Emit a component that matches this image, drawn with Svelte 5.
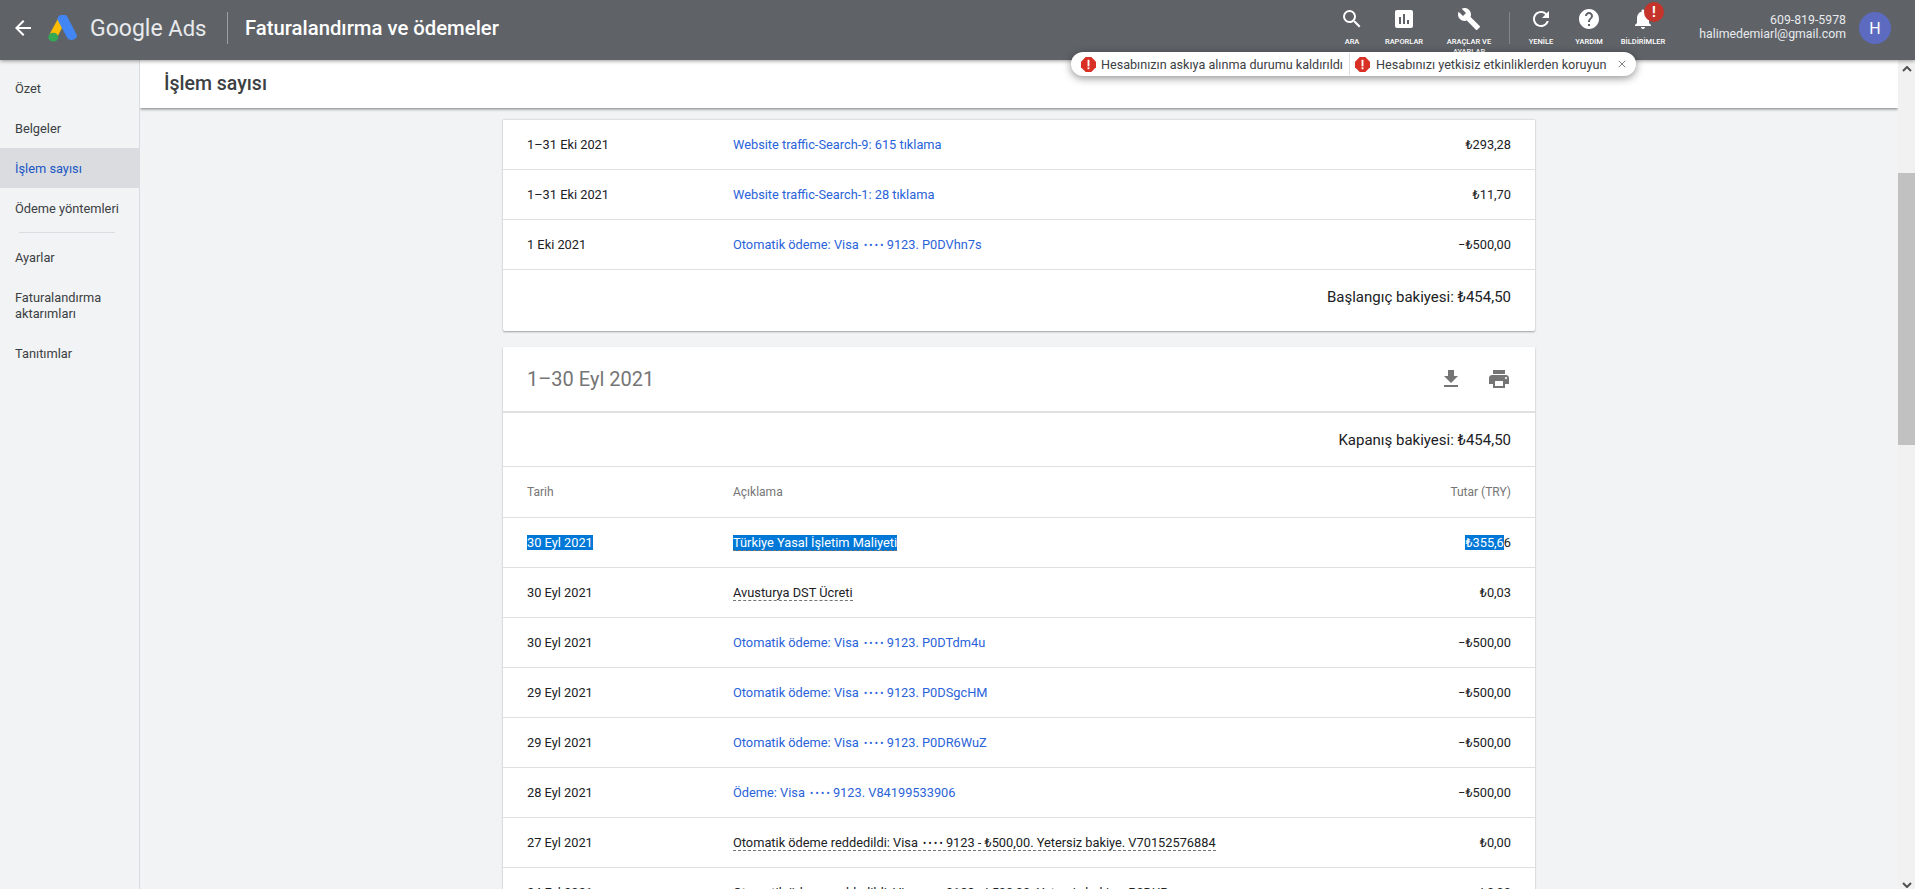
<script lang="ts">
  type Row = {
    date: string;
    desc: string;
    amount: string;
    kind?: 'link' | 'dash' | 'sel';
  };

  const nav = ['Özet', 'Belgeler', 'İşlem sayısı', 'Ödeme yöntemleri'];
  const nav2 = ['Ayarlar', 'Faturalandırma aktarımları', 'Tanıtımlar'];

  const octRows: Row[] = [
    { date: '1–31 Eki 2021', desc: 'Website traffic-Search-9: 615 tıklama', amount: '₺293,28', kind: 'link' },
    { date: '1–31 Eki 2021', desc: 'Website traffic-Search-1: 28 tıklama', amount: '₺11,70', kind: 'link' },
    { date: '1 Eki 2021', desc: 'Otomatik ödeme: Visa •••• 9123. P0DVhn7s', amount: '−₺500,00', kind: 'link' }
  ];

  const sepRows: Row[] = [
    { date: '30 Eyl 2021', desc: 'Avusturya DST Ücreti', amount: '₺0,03', kind: 'dash' },
    { date: '30 Eyl 2021', desc: 'Otomatik ödeme: Visa •••• 9123. P0DTdm4u', amount: '−₺500,00', kind: 'link' },
    { date: '29 Eyl 2021', desc: 'Otomatik ödeme: Visa •••• 9123. P0DSgcHM', amount: '−₺500,00', kind: 'link' },
    { date: '29 Eyl 2021', desc: 'Otomatik ödeme: Visa •••• 9123. P0DR6WuZ', amount: '−₺500,00', kind: 'link' },
    { date: '28 Eyl 2021', desc: 'Ödeme: Visa •••• 9123. V84199533906', amount: '−₺500,00', kind: 'link' },
    { date: '27 Eyl 2021', desc: 'Otomatik ödeme reddedildi: Visa •••• 9123 - ₺500,00. Yetersiz bakiye. V70152576884', amount: '₺0,00', kind: 'dash' },
    { date: '24 Eyl 2021', desc: 'Otomatik ödeme reddedildi: Visa •••• 9123 - ₺500,00. Yetersiz bakiye. P0DUR', amount: '₺0,00', kind: 'dash' }
  ];
</script>

{#snippet cardText(text: string)}
  {#each text.split('•••• ') as part, j}{#if j}<span class="dots">••••</span>{/if}{part}{/each}
{/snippet}

<div class="page">
  <header class="topbar">
    <svg class="back" viewBox="0 0 24 24" width="24" height="24"><path fill="#fff" d="M20 11H7.83l5.59-5.59L12 4l-8 8 8 8 1.41-1.41L7.83 13H20z" /></svg>
    <svg class="logo" viewBox="0 0 26 28" width="30" height="27" preserveAspectRatio="none">
      <path d="M9.2 2.6 1.5 19.8l6.6 3 6.4-15z" fill="#fbbc04" />
      <path d="M8.5 5.5a4.6 4.6 0 0 1 8-4.2L24.6 20a4.4 4.4 0 0 1-8 3.6z" fill="#4285f4" />
      <ellipse cx="4.6" cy="23" rx="4.300" ry="4.600" fill="#34a853" />
    </svg>
    <div class="brand"><span class="g">Google</span> <span class="a">Ads</span></div>
    <div class="vr"></div>
    <div class="title">Faturalandırma ve ödemeler</div>

    <div class="tools">
      <div class="tool t-search">
        <svg viewBox="0 0 24 24" width="24" height="24"><path fill="#fff" d="M15.5 14h-.79l-.28-.27A6.47 6.47 0 0 0 16 9.5 6.5 6.5 0 1 0 9.5 16c1.61 0 3.09-.59 4.23-1.57l.27.28v.79l5 4.99L20.49 19l-4.99-5zm-6 0C7.01 14 5 11.99 5 9.5S7.01 5 9.5 5 14 7.01 14 9.5 11.99 14 9.5 14z" /></svg>
        <span>ARA</span>
      </div>
      <div class="tool t-rep">
        <svg viewBox="0 0 24 24" width="24" height="24"><path fill="#fff" d="M19 3H5c-1.1 0-2 .9-2 2v14c0 1.1.9 2 2 2h14c1.1 0 2-.9 2-2V5c0-1.100-.9-2-2-2zM9 17H7v-7h2v7zm4 0h-2V7h2v10zm4 0h-2v-4h2v4z" /></svg>
        <span>RAPORLAR</span>
      </div>
      <div class="tool t-set">
        <svg viewBox="0 0 24 24" width="24" height="24"><path fill="#fff" d="M22.700 19l-9.100-9.100c.9-2.300.4-5-1.500-6.900-2-2-5-2.400-7.400-1.300L9 6 6 9 1.600 4.700C.4 7.100.9 10.100 2.900 12.100c1.900 1.900 4.600 2.400 6.900 1.500l9.100 9.100c.4.400 1 .4 1.400 0l2.300-2.300c.5-.4.500-1.100.1-1.400z" /></svg>
        <span>ARAÇLAR VE AYARLAR</span>
      </div>
      <div class="tool-sep"></div>
      <div class="tool t-ref">
        <svg viewBox="0 0 24 24" width="24" height="24"><path fill="#fff" d="M17.650 6.350A7.958 7.958 0 0 0 12 4c-4.420 0-7.990 3.580-7.990 8s3.570 8 7.990 8c3.730 0 6.840-2.550 7.730-6h-2.080A5.990 5.990 0 0 1 12 18c-3.310 0-6-2.690-6-6s2.690-6 6-6c1.660 0 3.140.69 4.220 1.780L13 11h7V4l-2.350 2.350z" /></svg>
        <span>YENİLE</span>
      </div>
      <div class="tool t-help">
        <svg viewBox="0 0 24 24" width="24" height="24"><path fill="#fff" d="M12 2C6.480 2 2 6.480 2 12s4.480 10 10 10 10-4.480 10-10S17.520 2 12 2zm1 17h-2v-2h2v2zm2.070-7.750l-.9.920C13.450 12.900 13 13.500 13 15h-2v-.5c0-1.100.45-2.100 1.170-2.830l1.240-1.260c.37-.36.59-.86.59-1.410 0-1.100-.9-2-2-2s-2 .9-2 2H8c0-2.210 1.790-4 4-4s4 1.790 4 4c0 .88-.36 1.680-.93 2.250z" /></svg>
        <span>YARDIM</span>
      </div>
      <div class="tool t-bell">
        <svg viewBox="0 0 24 24" width="24" height="24"><path fill="#fff" d="M12 22c1.100 0 2-.9 2-2h-4c0 1.100.9 2 2 2zm6-6v-5c0-3.070-1.630-5.640-4.500-6.320V4c0-.83-.67-1.500-1.500-1.500s-1.500.67-1.500 1.500v.68C7.640 5.360 6 7.920 6 11v5l-2 2v1h16v-1l-2-2z" /></svg>
        <span>BİLDİRİMLER</span>
        <b class="bang">!</b>
      </div>
    </div>

    <div class="account">
      <div>609-819-5978</div>
      <div>halimedemiarl@gmail.com</div>
    </div>
    <div class="avatar">H</div>
  </header>

  <div class="body">
    <aside class="side">
      <nav>
        {#each nav as item, i}
          <div class="nav-item" class:active={i === 2}>{item}</div>
        {/each}
        <div class="nav-sep"></div>
        {#each nav2 as item, i}
          <div class="nav-item" class:tall={i === 1}>{item}</div>
        {/each}
      </nav>
    </aside>

    <main class="main">
      <div class="subhead">İşlem sayısı</div>

      <div class="content">
        <section class="card first">
          {#each octRows as r}
            <div class="row">
              <div class="c-date">{r.date}</div>
              <div class="c-desc"><span class={r.kind}>{@render cardText(r.desc)}</span></div>
              <div class="c-amt">{r.amount}</div>
            </div>
          {/each}
          <div class="balance open">Başlangıç bakiyesi: ₺454,50</div>
        </section>

        <section class="card">
          <div class="card-head">
            <h2>1–30 Eyl 2021</h2>
            <div class="card-icons">
              <svg viewBox="0 0 24 24" width="24" height="24"><path fill="#757575" d="M19 9h-4V3H9v6H5l7 7 7-7zM5 18v2h14v-2H5z" /></svg>
              <svg viewBox="0 0 24 24" width="24" height="24"><path fill="#757575" d="M19 8H5c-1.660 0-3 1.340-3 3v6h4v4h12v-4h4v-6c0-1.660-1.340-3-3-3zm-3 11H8v-5h8v5zm3-7c-.55 0-1-.45-1-1s.45-1 1-1 1 .45 1 1-.45 1-1 1zm-1-9H6v4h12V3z" /></svg>
            </div>
          </div>
          <div class="balance close">Kapanış bakiyesi: ₺454,50</div>
          <div class="row head">
            <div class="c-date">Tarih</div>
            <div class="c-desc">Açıklama</div>
            <div class="c-amt">Tutar (TRY)</div>
          </div>
          <div class="row">
            <div class="c-date"><span class="sel-text">30 Eyl 2021</span></div>
            <div class="c-desc"><span class="dash sel-text">Türkiye Yasal İşletim Maliyeti</span></div>
            <div class="c-amt"><span class="sel-text">₺355,6</span>6</div>
          </div>
          {#each sepRows as r}
            <div class="row">
              <div class="c-date">{r.date}</div>
              <div class="c-desc"><span class={r.kind}>{@render cardText(r.desc)}</span></div>
              <div class="c-amt">{r.amount}</div>
            </div>
          {/each}
        </section>
      </div>
    </main>

    <div class="scrollbar">
      <svg class="arrow up" viewBox="0 0 10 6" width="10" height="6"><path d="M1 5l4-4 4 4" fill="none" stroke="#505050" stroke-width="2" /></svg>
      <div class="thumb"></div>
      <svg class="arrow down" viewBox="0 0 10 6" width="10" height="6"><path d="M1 1l4 4 4-4" fill="none" stroke="#505050" stroke-width="2" /></svg>
    </div>
  </div>

  <div class="toast">
    <svg class="warn" viewBox="0 0 16 16" width="16" height="16"><path fill="#d93025" d="M5 0h6l5 5v6l-5 5H5l-5-5V5z" /><rect x="7" y="3" width="2" height="7" fill="#fff" /><rect x="7" y="11" width="2" height="2" fill="#fff" /></svg>
    <span class="msg one">Hesabınızın askıya alınma durumu kaldırıldı</span>
    <i class="toast-sep"></i>
    <svg class="warn" viewBox="0 0 16 16" width="16" height="16"><path fill="#d93025" d="M5 0h6l5 5v6l-5 5H5l-5-5V5z" /><rect x="7" y="3" width="2" height="7" fill="#fff" /><rect x="7" y="11" width="2" height="2" fill="#fff" /></svg>
    <span class="msg two">Hesabınızı yetkisiz etkinliklerden koruyun</span>
    <svg class="x" viewBox="0 0 10 10" width="10" height="10"><path d="M1 1l8 8M9 1l-8 8" stroke="#5f6368" stroke-width="1" fill="none" /></svg>
  </div>
</div>

<style>
  :global(body) {
    margin: 0;
    overflow: hidden;
    background: #f1f3f4;
    font-family: Roboto, "Liberation Sans", sans-serif;
    color: #202124;
  }

  .page {
    position: relative;
    height: 889px;
    overflow: hidden;
  }

  .topbar {
    position: relative;
    z-index: 3;
    height: 60px;
    box-sizing: border-box;
    padding-bottom: 4px;
    background: #5f6368;
    box-shadow: 0 1px 4px rgba(0, 0, 0, 0.4);
    display: flex;
    align-items: center;
    color: #fff;
  }

  .back {
    margin-left: 11px;
    flex: none;
  }

  .logo {
    margin-left: 13px;
    flex: none;
  }

  .brand {
    flex: none;
    width: 119px;
    margin-left: 12px;
    font-size: 23px;
    color: #e8eaed;
    white-space: nowrap;
  }

  .brand .a {
    font-size: 22px;
  }

  .vr {
    flex: none;
    width: 1px;
    height: 32px;
    margin-left: 18px;
    background: #9aa0a6;
  }

  .title {
    margin-left: 17px;
    font-size: 20.300px;
    font-weight: 500;
    white-space: nowrap;
  }

  .tools {
    margin-left: auto;
    align-self: flex-start;
    display: flex;
    align-items: flex-start;
    height: 60px;
  }

  .tool {
    position: relative;
    display: flex;
    flex-direction: column;
    align-items: center;
    padding-top: 7px;
    box-sizing: border-box;
    height: 60px;
    overflow: hidden;
  }

  .tool svg {
    flex: none;
  }

  .tool span {
    font-size: 7.500px;
    font-weight: 500;
    text-align: center;
    line-height: 10px;
    margin-top: 6px;
    max-width: 56px;
  }

  .t-search { width: 50px; }
  .t-rep { width: 54px; }
  .t-set { width: 76px; }
  .t-ref { width: 44px; }
  .t-help { width: 52px; }
  .t-bell { width: 56px; overflow: visible; }

  .tool-sep {
    width: 1px;
    height: 32px;
    margin: 12px 9px 0 2px;
    background: #80868b;
  }

  .bang {
    position: absolute;
    top: 2px;
    left: 29px;
    width: 20px;
    height: 20px;
    border-radius: 50%;
    background: #c5342a;
    font-size: 14px;
    text-align: center;
    line-height: 20px;
  }

  .account {
    flex: none;
    width: 148px;
    margin: 0 0 3px 27px;
    font-size: 12.300px;
    line-height: 14px;
    text-align: right;
    color: #e8eaed;
    white-space: nowrap;
  }

  .avatar {
    flex: none;
    width: 32px;
    height: 32px;
    margin: 0 24px 0 13px;
    border-radius: 50%;
    background: #5c6bc0;
    display: flex;
    align-items: center;
    justify-content: center;
    font-size: 16px;
  }

  .body {
    display: flex;
    height: 829px;
  }

  .side {
    flex: none;
    width: 139px;
    border-right: 1px solid #dadce0;
    padding-top: 8px;
    font-size: 12.800px;
    color: #3c4043;
  }

  .nav-item {
    display: flex;
    align-items: center;
    box-sizing: border-box;
    min-height: 40px;
    padding: 2px 12px 0 15px;
    line-height: 16px;
  }

  .nav-item.tall {
    min-height: 56px;
  }

  .nav-item.active {
    background: #dadce0;
    color: #1a56c4;
  }

  .nav-sep {
    height: 1px;
    margin: 4px 24px 4px 19px;
    background: #dadce0;
  }

  .main {
    flex: 1;
    min-width: 0;
    position: relative;
    overflow: hidden;
  }

  .subhead {
    position: relative;
    z-index: 2;
    height: 48px;
    line-height: 47px;
    padding-left: 24px;
    background: #fff;
    box-shadow: 0 1px 3px rgba(0, 0, 0, 0.5);
    font-size: 19.500px;
    font-weight: 500;
    color: #3c4043;
  }

  .content {
    width: 1032px;
    margin: 0 0 0 363px;
  }

  .card {
    background: #fff;
    border-radius: 2px;
    box-shadow: 0 1px 2px rgba(0, 0, 0, 0.35);
    margin-bottom: 16px;
  }

  .card.first {
    border-radius: 0 0 2px 2px;
    border-top: 1px solid #e0e0e0;
    margin-top: 11px;
  }

  .row {
    display: flex;
    align-items: center;
    height: 49px;
    padding: 0 24px;
    border-bottom: 1px solid #e0e0e0;
    font-size: 12.800px;
  }

  .row.head {
    height: 50px;
    color: #757575;
    font-size: 12px;
  }

  .c-date {
    flex: none;
    width: 206px;
  }

  .c-desc {
    flex: 1;
    min-width: 0;
    white-space: nowrap;
  }

  .c-amt {
    flex: none;
    text-align: right;
  }

  .link {
    color: #2a63d9;
  }

  .dash {
    border-bottom: 1px dashed #757575;
  }

  .dots {
    margin: 0 1px 0 2px;
    font-size: 8.500px;
    font-weight: 700;
    letter-spacing: 2.400px;
    vertical-align: 1px;
  }

  .sel-text {
    background: #0078d7;
    color: #fff;
  }

  .balance {
    display: flex;
    justify-content: flex-end;
    align-items: center;
    padding: 0 24px;
    font-size: 15px;
    box-sizing: border-box;
  }

  .balance.open {
    height: 61px;
    align-items: flex-start;
    padding-top: 18px;
  }

  .balance.close {
    height: 54px;
    border-bottom: 1px solid #e0e0e0;
  }

  .card-head {
    height: 64px;
    display: flex;
    align-items: center;
    justify-content: space-between;
    padding: 0 24px;
    border-bottom: 2px solid #e0e0e0;
  }

  .card-head h2 {
    margin: 0;
    font-size: 20px;
    font-weight: 400;
    color: #757575;
  }

  .card-icons {
    display: flex;
    gap: 24px;
  }

  .scrollbar {
    flex: none;
    width: 17px;
    background: #f1f1f1;
    position: relative;
  }

  .arrow {
    position: absolute;
    left: 4px;
  }

  .arrow.up {
    top: 6px;
  }

  .arrow.down {
    bottom: 1px;
  }

  .thumb {
    position: absolute;
    top: 113px;
    left: 0;
    right: 0;
    height: 272px;
    background: #c1c1c1;
  }

  .toast {
    position: absolute;
    z-index: 5;
    top: 52px;
    left: 1071px;
    width: 565px;
    height: 24px;
    box-sizing: border-box;
    padding: 0 10px;
    display: flex;
    align-items: center;
    background: #fff;
    border-radius: 12px;
    box-shadow: 0 2px 8px rgba(0, 0, 0, 0.45);
    font-size: 12.600px;
    color: #3c4043;
    white-space: nowrap;
  }

  .warn {
    flex: none;
    width: 15px;
    height: 15px;
  }

  .msg {
    margin-left: 5px;
  }

  .msg.one {
    width: 242px;
  }

  .msg.two {
    margin-left: 6px;
    width: 231px;
    font-size: 12.700px;
  }

  .toast-sep {
    flex: none;
    width: 1px;
    height: 22px;
    margin: 0 5px 0 6px;
    background: #dadce0;
  }

  .x {
    margin-left: 11px;
    width: 8px;
    height: 8px;
  }
</style>
